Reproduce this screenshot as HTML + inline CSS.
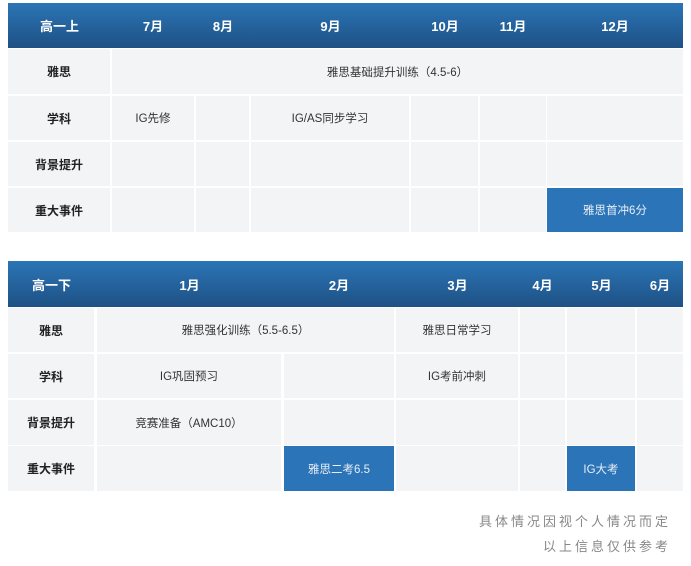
<!DOCTYPE html>
<html><head><meta charset="utf-8"><style>
body{margin:0;width:691px;height:566px;background:#fff;position:relative;overflow:hidden;font-family:"Liberation Sans","Noto Sans CJK SC",sans-serif;}
.h{position:absolute;background:linear-gradient(#2b75b6,#1e5184);}
.c{position:absolute;background:#f3f4f6;display:flex;align-items:center;justify-content:center;font-size:11.5px;color:#333;}
.t{position:absolute;display:flex;align-items:center;justify-content:center;color:#fff;font-weight:bold;font-size:13px;}
.b{font-weight:bold;color:#222;font-size:12px;}
.blue{background:#2b74b8;color:#e8eef6;}
.note{position:absolute;right:20px;font-size:13px;color:#888;letter-spacing:3px;}
</style></head><body>
<div class="h" style="left:8px;top:3px;width:675px;height:45px"></div>
<div class="t" style="left:8px;top:3px;width:103px;height:45px">高一上</div>
<div class="t" style="left:112px;top:3px;width:82px;height:45px">7月</div>
<div class="t" style="left:196px;top:3px;width:54px;height:45px">8月</div>
<div class="t" style="left:251px;top:3px;width:159px;height:45px">9月</div>
<div class="t" style="left:411px;top:3px;width:68px;height:45px">10月</div>
<div class="t" style="left:480px;top:3px;width:66px;height:45px">11月</div>
<div class="t" style="left:547px;top:3px;width:136px;height:45px">12月</div>

<div class="c b" style="left:8px;top:49px;width:102px;height:45px">雅思</div>
<div class="c" style="left:112px;top:49px;width:571px;height:45px">雅思基础提升训练（4.5-6）</div>

<div class="c b" style="left:8px;top:96px;width:102px;height:44px">学科</div>
<div class="c" style="left:112px;top:96px;width:82px;height:44px">IG先修</div>
<div class="c" style="left:196px;top:96px;width:53px;height:44px"></div>
<div class="c" style="left:251px;top:96px;width:158px;height:44px">IG/AS同步学习</div>
<div class="c" style="left:411px;top:96px;width:67px;height:44px"></div>
<div class="c" style="left:480px;top:96px;width:66px;height:44px"></div>
<div class="c" style="left:547px;top:96px;width:136px;height:44px"></div>

<div class="c b" style="left:8px;top:142px;width:102px;height:44px">背景提升</div>
<div class="c" style="left:112px;top:142px;width:82px;height:44px"></div>
<div class="c" style="left:196px;top:142px;width:53px;height:44px"></div>
<div class="c" style="left:251px;top:142px;width:158px;height:44px"></div>
<div class="c" style="left:411px;top:142px;width:67px;height:44px"></div>
<div class="c" style="left:480px;top:142px;width:66px;height:44px"></div>
<div class="c" style="left:547px;top:142px;width:136px;height:44px"></div>

<div class="c b" style="left:8px;top:188px;width:102px;height:44px">重大事件</div>
<div class="c" style="left:112px;top:188px;width:82px;height:44px"></div>
<div class="c" style="left:196px;top:188px;width:53px;height:44px"></div>
<div class="c" style="left:251px;top:188px;width:158px;height:44px"></div>
<div class="c" style="left:411px;top:188px;width:67px;height:44px"></div>
<div class="c" style="left:480px;top:188px;width:66px;height:44px"></div>
<div class="c blue" style="left:547px;top:188px;width:136px;height:44px">雅思首冲6分</div>

<div class="h" style="left:8px;top:261px;width:675px;height:46px"></div>
<div class="t" style="left:8px;top:261px;width:87px;height:46px">高一下</div>
<div class="t" style="left:96px;top:261px;width:187px;height:46px">1月</div>
<div class="t" style="left:283px;top:261px;width:112px;height:46px">2月</div>
<div class="t" style="left:396px;top:261px;width:123px;height:46px">3月</div>
<div class="t" style="left:519px;top:261px;width:47px;height:46px">4月</div>
<div class="t" style="left:567px;top:261px;width:69px;height:46px">5月</div>
<div class="t" style="left:637px;top:261px;width:46px;height:46px">6月</div>

<div class="c b" style="left:8px;top:308px;width:86px;height:44px">雅思</div>
<div class="c" style="left:97px;top:308px;width:297px;height:44px">雅思强化训练（5.5-6.5）</div>
<div class="c" style="left:396px;top:308px;width:122px;height:44px">雅思日常学习</div>
<div class="c" style="left:520px;top:308px;width:45px;height:44px"></div>
<div class="c" style="left:567px;top:308px;width:68px;height:44px"></div>
<div class="c" style="left:637px;top:308px;width:46px;height:44px"></div>

<div class="c b" style="left:8px;top:354px;width:86px;height:44px">学科</div>
<div class="c" style="left:97px;top:354px;width:184px;height:44px">IG巩固预习</div>
<div class="c" style="left:284px;top:354px;width:110px;height:44px"></div>
<div class="c" style="left:396px;top:354px;width:122px;height:44px">IG考前冲刺</div>
<div class="c" style="left:520px;top:354px;width:45px;height:44px"></div>
<div class="c" style="left:567px;top:354px;width:68px;height:44px"></div>
<div class="c" style="left:637px;top:354px;width:46px;height:44px"></div>

<div class="c b" style="left:8px;top:400px;width:86px;height:45px">背景提升</div>
<div class="c" style="left:97px;top:400px;width:184px;height:45px">竞赛准备（AMC10）</div>
<div class="c" style="left:284px;top:400px;width:110px;height:45px"></div>
<div class="c" style="left:396px;top:400px;width:122px;height:45px"></div>
<div class="c" style="left:520px;top:400px;width:45px;height:45px"></div>
<div class="c" style="left:567px;top:400px;width:68px;height:45px"></div>
<div class="c" style="left:637px;top:400px;width:46px;height:45px"></div>

<div class="c b" style="left:8px;top:446px;width:86px;height:45px">重大事件</div>
<div class="c" style="left:97px;top:446px;width:184px;height:45px"></div>
<div class="c blue" style="left:284px;top:446px;width:110px;height:45px">雅思二考6.5</div>
<div class="c" style="left:396px;top:446px;width:122px;height:45px"></div>
<div class="c" style="left:520px;top:446px;width:45px;height:45px"></div>
<div class="c blue" style="left:567px;top:446px;width:68px;height:45px">IG大考</div>
<div class="c" style="left:637px;top:446px;width:46px;height:45px"></div>

<div class="note" style="top:511px">具体情况因视个人情况而定</div>
<div class="note" style="top:536px">以上信息仅供参考</div>
</body></html>
